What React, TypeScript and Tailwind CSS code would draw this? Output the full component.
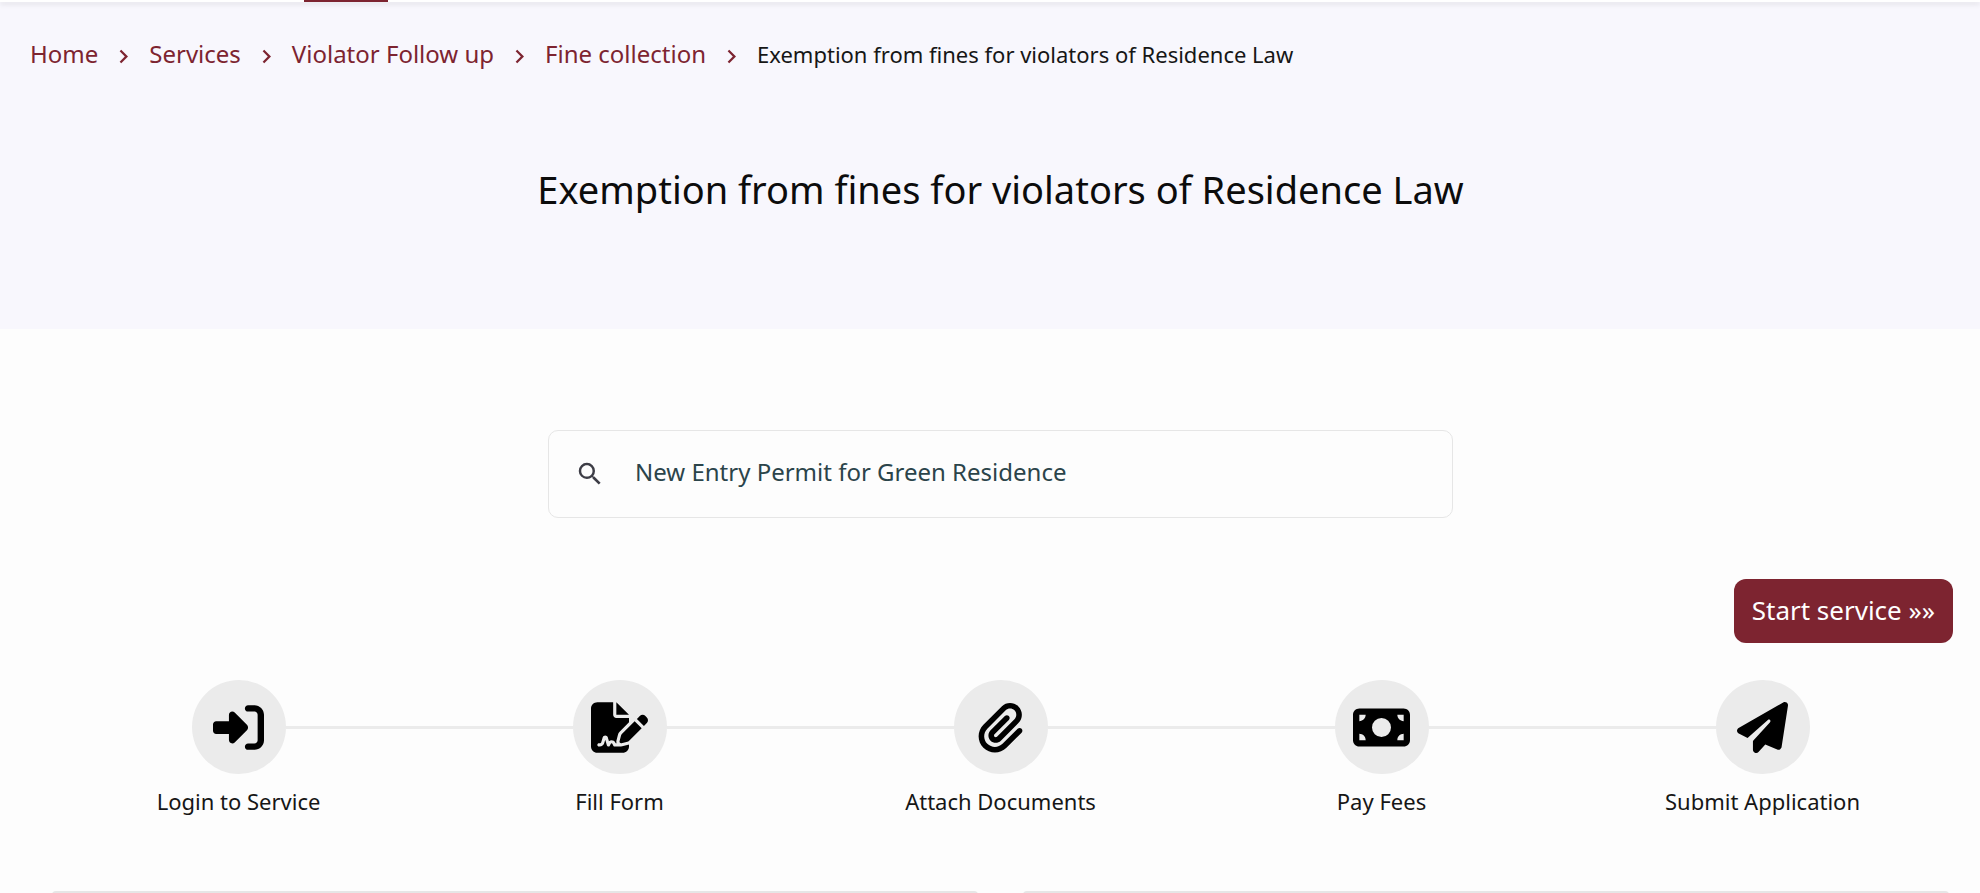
import type { IconType } from "react-icons";
import { FaFileSignature, FaMoneyBill, FaPaperclip, FaPaperPlane, FaRightToBracket } from "react-icons/fa6";
import { MdChevronRight, MdSearch } from "react-icons/md";

const CRUMBS = ["Home", "Services", "Violator Follow up", "Fine collection"];
const TITLE = "Exemption from fines for violators of Residence Law";

// wide icons use a 576-unit view box, so they need a bigger box for the same glyph height
const STEPS: { label: string; icon: IconType; wide?: boolean }[] = [
  { label: "Login to Service", icon: FaRightToBracket },
  { label: "Fill Form", icon: FaFileSignature, wide: true },
  { label: "Attach Documents", icon: FaPaperclip },
  { label: "Pay Fees", icon: FaMoneyBill, wide: true },
  { label: "Submit Application", icon: FaPaperPlane },
];

function Breadcrumb() {
  return (
    <nav aria-label="Breadcrumb" className="px-[30px] pt-[31px]">
      <ol className="flex items-center">
        {CRUMBS.map((crumb) => (
          <li key={crumb} className="flex items-center text-2xl leading-[42px] text-[#7d2430]">
            <a href="#">{crumb}</a>
            <MdChevronRight className="mx-3 mt-1 size-[27px]" />
          </li>
        ))}
        <li className="text-[22px] leading-[42px] text-[#161616]" aria-current="page">
          {TITLE}
        </li>
      </ol>
    </nav>
  );
}

function Steps() {
  return (
    <ol className="mt-[37px] grid grid-cols-5">
      {STEPS.map(({ label, icon: Icon, wide }, i) => (
        <li key={label} className="flex flex-col items-center">
          <div className="flex w-full items-center">
            <span className={i === 0 ? "h-[3px] flex-1" : "h-[3px] flex-1 bg-[#ebebeb]"} />
            <span className="flex size-[94px] items-center justify-center rounded-full bg-[#ebebeb]">
              <Icon className={wide ? "size-[57px] text-black" : "size-[51px] text-black"} />
            </span>
            <span className={i === STEPS.length - 1 ? "h-[3px] flex-1" : "h-[3px] flex-1 bg-[#ebebeb]"} />
          </div>
          <span className="mt-[11px] text-[22px] leading-8 text-[#161616]">{label}</span>
        </li>
      ))}
    </ol>
  );
}

export default function App() {
  return (
    <div className="min-h-screen overflow-hidden bg-[#fdfdfd] font-['Noto_Sans',sans-serif]">
      {/* Bottom edge of the site navigation */}
      <div className="relative h-[2px] bg-white pl-[304px] shadow-[0_2px_5px_rgba(0,0,0,0.15)]">
        <div className="h-[2px] w-[84px] bg-[#7d2430]" />
      </div>

      <header className="bg-[#f8f7fd] pb-[110px]">
        <Breadcrumb />
        <h1 className="mt-[84px] pl-[21px] text-center text-[38px] leading-[60px] text-[#0c0c0c]">{TITLE}</h1>
      </header>

      <main className="pr-[27px] pl-12">
        <label className="mx-auto mt-[101px] flex h-[88px] w-full max-w-[905px] items-center rounded-[10px] border border-[#e6e6e6] pl-[26px]">
          <MdSearch className="size-[30px] text-[#3d3d46]" />
          <input
            type="text"
            aria-label="Search services"
            defaultValue="New Entry Permit for Green Residence"
            className="ml-[30px] flex-1 bg-transparent pb-1 text-2xl text-[#2b444a] outline-none"
          />
        </label>

        <div className="mt-[61px] flex justify-end">
          <button type="button" className="h-16 rounded-xl bg-[#7d2430] px-[18px] pb-[2px] text-[26px] text-white">
            Start service »»
          </button>
        </div>

        <Steps />

        <div className="mt-[74px] grid grid-cols-2 gap-[45px] px-1">
          <section className="h-10 rounded-t border-t-2 border-[#e6e6e6]" />
          <section className="h-10 rounded-t border-t-2 border-[#e6e6e6]" />
        </div>
      </main>
    </div>
  );
}
